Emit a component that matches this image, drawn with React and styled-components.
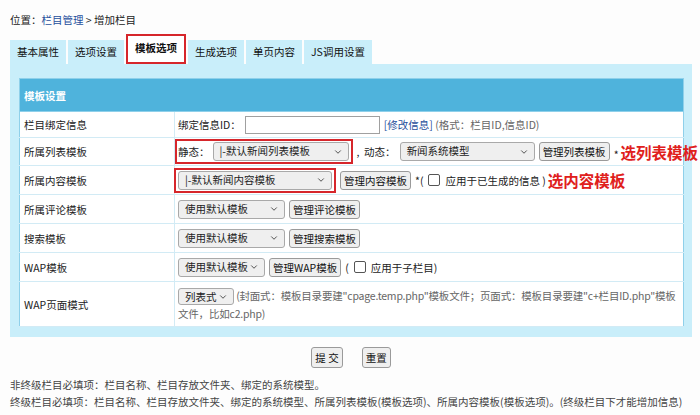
import React from 'react';
import styled, { createGlobalStyle } from 'styled-components';
import { ChevronDown } from 'lucide-react';

const GlobalStyle = createGlobalStyle`
  html, body {
    margin: 0;
    padding: 0;
    background: #fdfdfd;
  }
  body {
    font-family: "Noto Sans CJK SC", "Noto Sans", sans-serif;
    font-size: 10.5px;
    color: #222;
  }
`;

const Page = styled.div`
  width: 700px;
  height: 415px;
  box-sizing: border-box;
  padding: 12px 8px 0 10px;
  overflow: hidden;
`;

const Crumb = styled.div`
  height: 16px;
  line-height: 16px;
`;

const Link = styled.span`
  color: #1f4f9c;
`;

const TabBar = styled.div`
  display: flex;
  align-items: flex-end;
  gap: 2px;
  height: 30px;
  margin-top: 6px;
`;

const Tab = styled.div`
  box-sizing: border-box;
  height: ${(p) => (p.$active ? '30px' : '24px')};
  line-height: 24px;
  padding: 0 7px;
  background: ${(p) => (p.$active ? '#fff' : '#c9eefa')};
  border: ${(p) => (p.$active ? '2px solid #d6262b' : 'none')};
  font-weight: ${(p) => (p.$active ? 'bold' : 'normal')};
  color: #111;
`;

const Panel = styled.div`
  background: #c9eefa;
  padding: 14px 8px 10px 9px;
`;

const Table = styled.table`
  width: 100%;
  table-layout: fixed;
  border-collapse: collapse;
  background: #fff;
  border: 1px solid #8fd0ea;
`;

const HeadCell = styled.th`
  height: 32px;
  padding: 0 4px;
  text-align: left;
  background: #4fb3dc;
  color: #fff;
  font-weight: bold;
  border-bottom: 1px solid #8fd0ea;
`;

const Row = styled.tr`
  height: ${(p) => p.$h || 28}px;
`;

const Label = styled.td`
  padding: 0 4px;
  border-right: 1px solid #d2ebf5;
  border-bottom: 1px solid #d2ebf5;
`;

const Value = styled.td`
  padding: 0 3px;
  border-bottom: 1px solid #d2ebf5;
`;

const Line = styled.div`
  display: flex;
  align-items: center;
  gap: ${(p) => p.$gap ?? 4}px;
  white-space: nowrap;
  > * {
    flex: none;
  }
`;

const Flow = styled.div`
  line-height: 17px;
  color: #666;
  letter-spacing: -0.2px;
  padding: 4px 0 3px;
`;

const Select = styled.div`
  box-sizing: border-box;
  display: inline-flex;
  flex: none;
  align-items: center;
  justify-content: space-between;
  width: ${(p) => p.$w}px;
  height: ${(p) => p.$h || 19}px;
  padding: 0 5px 0 6px;
  border: 1px solid #a9a9a9;
  border-radius: 3px;
  background: #efefef;
  color: #222;
  line-height: 1;
  letter-spacing: 0;
  vertical-align: middle;
  svg {
    flex: none;
  }
`;

const Button = styled.div`
  box-sizing: border-box;
  display: inline-flex;
  flex: none;
  align-items: center;
  height: ${(p) => p.$h || 19}px;
  padding: 0 3px;
  border: 1px solid #9a9a9a;
  border-radius: 3px;
  background: #efefef;
  color: #111;
`;

const RedBox = styled.div`
  display: flex;
  align-items: center;
  gap: 3px;
  height: 25px;
  box-sizing: border-box;
  margin-left: ${(p) => p.$ml ?? -3}px;
  padding: 0 2px 0 ${(p) => p.$pl ?? 1}px;
  border: 2px solid #d6262b;
`;

const Input = styled.div`
  box-sizing: border-box;
  width: 135px;
  height: 18px;
  border: 1px solid #a0a0a0;
  background: #fff;
`;

const Hint = styled.span`
  color: #666;
`;

const Note = styled.span`
  color: #e0201c;
  font-size: 15.5px;
  font-weight: bold;
  margin-left: 2px;
`;

const Check = styled.span`
  display: inline-block;
  box-sizing: border-box;
  width: 12px;
  height: 12px;
  border: 1px solid #555;
  border-radius: 2px;
  margin: 0 5px;
`;

const Actions = styled.div`
  display: flex;
  justify-content: center;
  gap: 19px;
  margin-top: 10px;
`;

const Notes = styled.div`
  margin-top: 8px;
  line-height: 17px;
  color: #444;
`;

const Sel = ({ w, h, children }) => (
  <Select $w={w} $h={h}>
    <span>{children}</span>
    <ChevronDown size={10} strokeWidth={2.2} color="#444" />
  </Select>
);

const tabs = ['基本属性', '选项设置', '模板选项', '生成选项', '单页内容', 'JS调用设置'];

export default function App() {
  return (
    <>
      <GlobalStyle />
      <Page>
        <Crumb>
          位置：<Link>栏目管理</Link> &gt; 增加栏目
        </Crumb>
        <TabBar>
          {tabs.map((t) => (
            <Tab key={t} $active={t === '模板选项'}>{t}</Tab>
          ))}
        </TabBar>
        <Panel>
          <Table>
            <colgroup>
              <col style={{ width: 155 }} />
              <col />
            </colgroup>
            <thead>
              <tr>
                <HeadCell colSpan={2}>模板设置</HeadCell>
              </tr>
            </thead>
            <tbody>
              <Row $h={26}>
                <Label>栏目绑定信息</Label>
                <Value>
                  <Line>
                    <span>绑定信息ID：</span>
                    <Input />
                    <span>
                      <Link>[修改信息]</Link> <Hint>(格式：栏目ID,信息ID)</Hint>
                    </span>
                  </Line>
                </Value>
              </Row>
              <Row $h={28}>
                <Label>所属列表模板</Label>
                <Value>
                  <Line>
                    <RedBox>
                      <span>静态：</span>
                      <Sel w={136}>|-默认新闻列表模板</Sel>
                    </RedBox>
                    <span>,&nbsp; 动态：</span>
                    <Sel w={135}>新闻系统模型</Sel>
                    <Button>管理列表模板</Button>
                    <span>
                      *<Note>选列表模板</Note>
                    </span>
                  </Line>
                </Value>
              </Row>
              <Row $h={29}>
                <Label>所属内容模板</Label>
                <Value>
                  <Line>
                    <RedBox $ml={-4} $pl={2}>
                      <Sel w={154}>|-默认新闻内容模板</Sel>
                    </RedBox>
                    <Button>管理内容模板</Button>
                    <Line $gap={0}>
                      *(<Check />
                      应用于已生成的信息 )<Note>选内容模板</Note>
                    </Line>
                  </Line>
                </Value>
              </Row>
              <Row $h={29}>
                <Label>所属评论模板</Label>
                <Value>
                  <Line>
                    <Sel w={107}>使用默认模板</Sel>
                    <Button>管理评论模板</Button>
                  </Line>
                </Value>
              </Row>
              <Row $h={29}>
                <Label>搜索模板</Label>
                <Value>
                  <Line>
                    <Sel w={107}>使用默认模板</Sel>
                    <Button>管理搜索模板</Button>
                  </Line>
                </Value>
              </Row>
              <Row $h={29}>
                <Label>WAP模板</Label>
                <Value>
                  <Line>
                    <Sel w={87}>使用默认模板</Sel>
                    <Button>管理WAP模板</Button>
                    <Line $gap={0}>
                      (<Check />
                      应用于子栏目)
                    </Line>
                  </Line>
                </Value>
              </Row>
              <Row $h={45}>
                <Label>WAP页面模式</Label>
                <Value>
                  <Flow>
                    <Sel w={56} h={17}>列表式</Sel> (封面式：模板目录要建"cpage.temp.php"模板文件；页面式：模板目录要建"c+栏目ID.php"模板文件，比如c2.php)
                  </Flow>
                </Value>
              </Row>
            </tbody>
          </Table>
        </Panel>
        <Actions>
          <Button $h={21}>提 交</Button>
          <Button $h={21}>重置</Button>
        </Actions>
        <Notes>
          <div>非终级栏目必填项：栏目名称、栏目存放文件夹、绑定的系统模型。</div>
          <div>终级栏目必填项：栏目名称、栏目存放文件夹、绑定的系统模型、所属列表模板(模板选项)、所属内容模板(模板选项)。(终级栏目下才能增加信息)</div>
        </Notes>
      </Page>
    </>
  );
}
